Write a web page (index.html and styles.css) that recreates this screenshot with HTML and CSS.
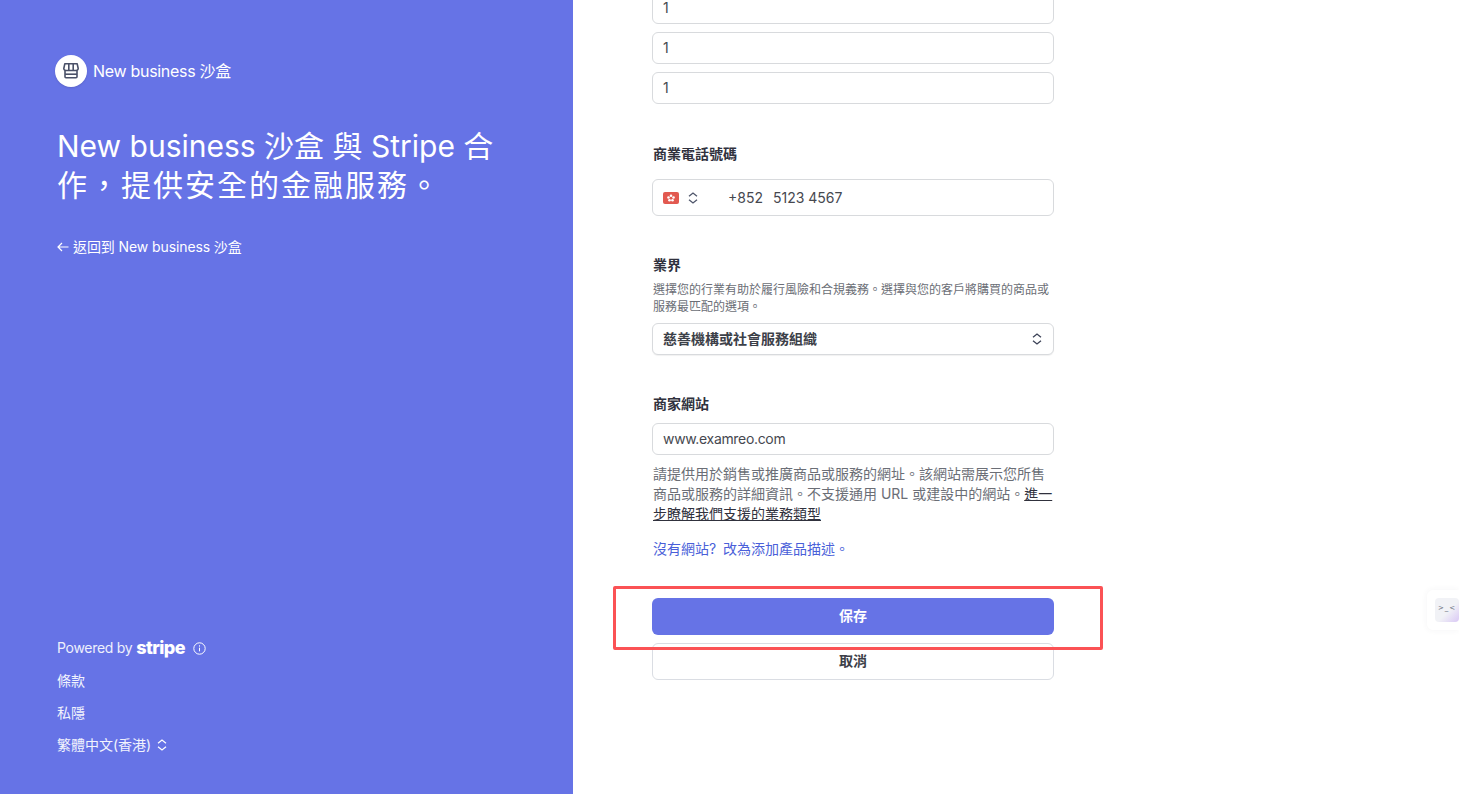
FILE: index.html
```html
<!DOCTYPE html>
<html lang="zh-Hant">
<head>
<meta charset="utf-8">
<title>New business 沙盒</title>
<link rel="stylesheet" href="styles.css">
</head>
<body>
<div class="page">
  <aside class="side">
    <div class="brand">
      <span class="brand-badge">
        <svg width="18" height="18" viewBox="0 0 18 18" fill="none" stroke="#4a5168" stroke-width="1.6" stroke-linejoin="round"><path d="M2.800 1.800h12.400l1 4.700a2 2 0 0 1-2.100 2H3.900a2 2 0 0 1-2.100-2z"/><path d="M6.800 2v6.400M11.200 2v6.400"/><path d="M3 8.600v6.200a1 1 0 0 0 1 1h10a1 1 0 0 0 1-1V8.600"/><path d="M3 12.200h12"/></svg>
      </span>
      <span class="brand-name">New business 沙盒</span>
    </div>
    <h1 class="headline">New business 沙盒 與 Stripe 合<span class="headline-wide">作，提供安全的金融服務。</span></h1>
    <a class="back"><span class="arrow">
      <svg width="12" height="10" viewBox="0 0 12 10" fill="none" stroke="#fff" stroke-width="1.200"><path d="M11.500 5H1M5 1 1 5l4 4"/></svg>
    </span>返回到 New business 沙盒</a>
    <div class="side-foot">
      <div class="powered">Powered by <span class="stripe">stripe</span>
        <svg class="info" width="13" height="13" viewBox="0 0 13 13" fill="none" stroke="#fff" stroke-width="1"><circle cx="6.500" cy="6.500" r="5.700"/><path d="M6.500 5.700v3.600M6.500 3.300v1.300"/></svg>
      </div>
      <a class="foot-link">條款</a>
      <a class="foot-link">私隱</a>
      <a class="foot-link">繁體中文(香港)
        <svg class="updown" width="10" height="12" viewBox="0 0 10 12" fill="none" stroke="#fff" stroke-width="1.200"><path d="M1 4.300 5 1l4 3.300M1 7.700 5 11l4-3.300"/></svg>
      </a>
    </div>
  </aside>
  <main class="content">
    <form class="form">
      <div class="stack">
        <div class="field">1</div>
        <div class="field">1</div>
        <div class="field">1</div>
      </div>
      <section class="group phone-group">
        <div class="label">商業電話號碼</div>
        <div class="field phone">
          <svg class="flag" width="16" height="12" viewBox="0 0 16 12"><rect width="16" height="12" rx="2" fill="#e25950"/><g fill="#fff"><circle cx="8" cy="3.700" r="1.300"/><circle cx="5.500" cy="5.500" r="1.300"/><circle cx="10.500" cy="5.500" r="1.300"/><circle cx="6.500" cy="8.300" r="1.300"/><circle cx="9.500" cy="8.300" r="1.300"/></g></svg>
          <svg class="updown-dark" width="10" height="12" viewBox="0 0 10 12" fill="none" stroke="#4f566b" stroke-width="1.300"><path d="M1 4.300 5 1l4 3.300M1 7.700 5 11l4-3.300"/></svg>
          <span class="dial">+852</span>
          <span>5123 4567</span>
        </div>
      </section>
      <section class="group industry-group">
        <div class="label">業界</div>
        <p class="hint">選擇您的行業有助於履行風險和合規義務。選擇與您的客戶將購買的商品或服務最匹配的選項。</p>
        <div class="field select">
          <span>慈善機構或社會服務組織</span>
          <svg width="10" height="12" viewBox="0 0 10 12" fill="none" stroke="#3c4257" stroke-width="1.300"><path d="M1 4.300 5 1l4 3.300M1 7.700 5 11l4-3.300"/></svg>
        </div>
      </section>
      <section class="group site-group">
        <div class="label">商家網站</div>
        <div class="field url">www.examreo.com</div>
        <p class="help">請提供用於銷售或推廣商品或服務的網址。該網站需展示您所售商品或服務的詳細資訊。不支援通用 URL 或建設中的網站。<a class="underline">進一步瞭解我們支援的業務類型</a></p>
        <a class="alt-link">沒有網站<span class="q">?</span>改為添加產品描述。</a>
      </section>
      <div class="btn primary">保存</div>
      <div class="btn secondary">取消</div>
    </form>
    <div class="mark-box"></div>
    <div class="widget"><span class="widget-face">&gt;_&lt;</span></div>
  </main>
</div>
</body>
</html>
```
FILE: styles.css
```css
* { box-sizing: border-box; }
html, body { margin: 0; height: 100%; overflow: hidden; background: #fff; }
body {
  font-family: Inter, "Noto Sans CJK TC", "Noto Sans CJK SC", sans-serif;
  color: #3c4257;
}
.page { display: flex; height: 795px; }

.side {
  width: 573px;
  flex: none;
  height: 794px;
  background: #6673e6;
  color: #fff;
  display: flex;
  flex-direction: column;
  padding: 55px 57px 0;
}
.brand { display: flex; align-items: center; gap: 6px; margin-left: -2px; height: 32px; }
.brand-badge {
  width: 32px; height: 32px; border-radius: 50%; background: #fff;
  display: flex; align-items: center; justify-content: center;
  box-shadow: 0 1px 2px rgba(50,50,93,.2);
}
.brand-name { font-size: 16px; line-height: 32px; letter-spacing: -0.3px; }
.headline {
  margin: 40px 0 0;
  width: 445px;
  font-size: 30px;
  line-height: 39px;
  font-weight: 400;
}
.headline-wide { letter-spacing: 2px; }
.back { display: flex; align-items: center; gap: 4px; margin-top: 32px; font-size: 14px; line-height: 20px; letter-spacing: -0.1px; }
.arrow { display: flex; }
.side-foot { margin-top: auto; padding-bottom: 39px; font-size: 14px; line-height: 20px; }
.powered { display: flex; align-items: center; height: 20px; margin-bottom: 13px; color: #eef0fc; letter-spacing: -0.3px; }
.stripe {
  font-family: Inter, sans-serif; font-weight: 800; font-size: 18px; letter-spacing: -0.6px;
  margin-left: 4px; color: #fff; line-height: 20px;
}
.info { margin-left: 8px; }
.foot-link { display: flex; align-items: center; height: 20px; margin-bottom: 12px; color: #f2f3fd; }
.foot-link:last-child { margin-bottom: 0; }
.updown { margin-left: 6px; }

.content { flex: 1; position: relative; overflow: hidden; }
.form { width: 402px; margin: -8px 0 0 79px; }
.stack { display: flex; flex-direction: column; gap: 8px; }
.field {
  height: 32px;
  border: 1px solid #d8dadd;
  border-radius: 6px;
  padding: 0 11px 0 10px;
  font-size: 14px;
  line-height: 30px;
  color: #46484f;
  background: #fff;
}
.url { letter-spacing: -0.33px; }
.group { display: flex; flex-direction: column; }
.label { font-size: 14px; line-height: 20px; font-weight: 700; color: #30313d; padding-left: 1px; }
.phone-group { margin-top: 40px; }
.phone-group .label { margin-bottom: 15px; }
.phone { height: 37px; display: flex; align-items: center; line-height: 35px; }
.flag { flex: none; }
.updown-dark { margin-left: 9px; flex: none; }
.dial { margin-left: 30px; margin-right: 10px; }
.industry-group { margin-top: 39px; }
.hint { margin: 6px 0 8px; padding-left: 1px; font-size: 12px; line-height: 17px; color: #6b6e76; }
.select {
  display: flex; align-items: center; justify-content: space-between;
  font-weight: 700; color: #3c4048;
  box-shadow: 0 1px 1px rgba(0,0,0,.06);
}
.site-group { margin-top: 39px; }
.site-group .label { margin-bottom: 9px; }
.help { margin: 9px 0 0; padding-left: 1px; font-size: 14px; line-height: 20px; color: #6b6e76; }
.underline { color: #30313d; text-decoration: underline; }
.alt-link { margin-top: 15px; padding-left: 1px; font-size: 14px; line-height: 20px; color: #4a5fd9; }
.q { display: inline-block; width: 14px; }
.btn {
  display: flex; align-items: center; justify-content: center;
  width: 402px; border-radius: 6px; font-size: 14px; font-weight: 700;
}
.primary { margin-top: 39px; height: 37px; padding-bottom: 3px; background: #6673e6; color: #fff; }
.secondary { margin-top: 8px; height: 37px; padding-bottom: 3px; border: 1px solid #dadde3; background: #fff; color: #3c4048; }

.mark-box {
  position: absolute;
  left: 40px; top: 586px;
  width: 490px; height: 64px;
  border: 3px solid #fb5255;
  border-radius: 2px;
}
.widget {
  position: absolute;
  right: 0; top: 590px;
  width: 32px; height: 40px;
  background: #fff;
  border-radius: 6px 0 0 6px;
  box-shadow: 0 0 6px rgba(60,66,87,.06);
  display: flex; align-items: center; justify-content: flex-end;
}
.widget-face {
  width: 24px; height: 24px; border-radius: 4px;
  background: linear-gradient(135deg, #f1f2f6 55%, #d9c8f5);
  font-size: 7px; line-height: 20px; letter-spacing: 1px; text-align: center; color: #6a7080;
  font-family: "DejaVu Sans", sans-serif;
}
```
